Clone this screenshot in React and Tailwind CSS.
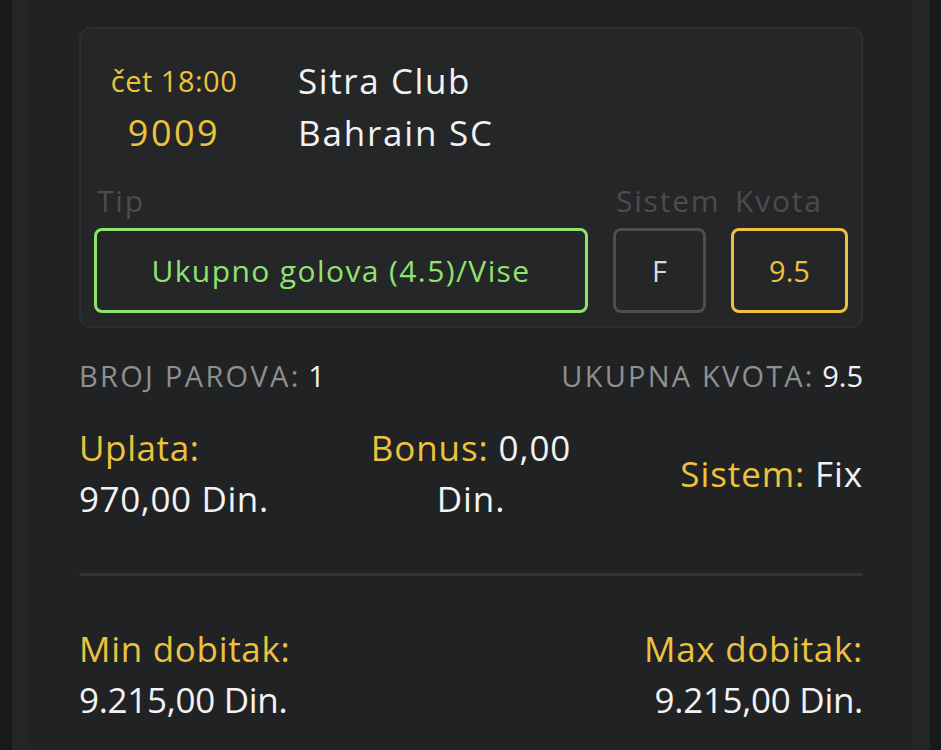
export default function App() {
  return (
    <div className="w-full h-[750px] flex bg-[#18191b] pl-[12px] pr-[11px] overflow-hidden font-['Open_Sans',sans-serif]">
      <div className="flex-1 border-x-[18px] border-[#242527] bg-[#212224] px-[49px] pt-[27px]">
        {/* card */}
        <div className="rounded-[12px] border-2 border-[#2c2e31] bg-[#252628] pt-[26px] pl-[13px] pr-[13px] pb-[13px]">
          <div className="flex">
            <div className="w-[160px] flex flex-col items-center">
              <div className="h-[52px] flex items-center text-[29px] tracking-[0.5px] text-[#ecc23e]">čet 18:00</div>
              <div className="h-[52px] flex items-center text-[36px] tracking-[2.5px] text-[#ecc23e]">9009</div>
            </div>
            <div className="ml-[44px] flex flex-col">
              <div className="h-[52px] flex items-center text-[35px] tracking-[1.6px] text-[#f2f2f2]">Sitra Club</div>
              <div className="h-[52px] flex items-center text-[35px] tracking-[1.8px] text-[#f2f2f2]">Bahrain SC</div>
            </div>
          </div>
          <div className="mt-[24px] grid grid-cols-[494px_93px_117px] gap-x-[25px]">
            <div className="h-[34px] flex items-center pl-[3px] text-[30px] tracking-[1.8px] text-[#4b4c4f] whitespace-nowrap">Tip</div>
            <div className="h-[34px] flex items-center pl-[3px] text-[30px] tracking-[1.8px] text-[#4b4c4f] whitespace-nowrap">Sistem</div>
            <div className="h-[34px] flex items-center pl-[4px] text-[30px] tracking-[1.8px] text-[#4b4c4f] whitespace-nowrap">Kvota</div>
            <div className="mt-[11px] h-[85px] rounded-[8px] border-[3px] border-[#8ee36b] flex items-center justify-center text-[30px] tracking-[1.4px] text-[#8fe36e] whitespace-nowrap">
              Ukupno golova (4.5)/Vise
            </div>
            <div className="mt-[11px] h-[85px] rounded-[8px] border-[3px] border-[#4d4e51] flex items-center justify-center text-[29px] text-[#d9d9d9]">
              F
            </div>
            <div className="mt-[11px] h-[85px] rounded-[8px] border-[3px] border-[#ecc23e] flex items-center justify-center text-[29px] text-[#ecc23e]">
              9.5
            </div>
          </div>
        </div>

        {/* totals */}
        <div className="mt-[28px] h-[40px] flex items-center justify-between text-[29px] text-[#8e8f91] whitespace-nowrap">
          <div>
            <span className="tracking-[2.3px]">BROJ PAROVA:</span> <span className="text-[#f2f2f2]">1</span>
          </div>
          <div>
            <span className="tracking-[2.2px]">UKUPNA KVOTA:</span> <span className="text-[#f2f2f2]">9.5</span>
          </div>
        </div>

        <div className="mt-[26px] grid grid-cols-3 items-center text-[35px] leading-[51px] text-[#f2f2f2]">
          <div>
            <div className="text-[#ecc23e] tracking-[0.6px]">Uplata:</div>
            <div className="tracking-[0.6px]">970,00 Din.</div>
          </div>
          <div className="text-center tracking-[0.9px]">
            <div>
              <span className="text-[#ecc23e]">Bonus:</span> 0,00
            </div>
            <div>Din.</div>
          </div>
          <div className="text-right tracking-[0.9px]">
            <span className="text-[#ecc23e]">Sistem:</span> Fix
          </div>
        </div>

        <div className="mt-[49px] h-[3px] rounded-full bg-[#323336]" />

        <div className="mt-[47px] flex justify-between text-[35px] leading-[51px] text-[#f2f2f2]">
          <div>
            <div className="text-[#ecc23e] tracking-[0.7px]">Min dobitak:</div>
            <div className="tracking-[-0.3px]">9.215,00 Din.</div>
          </div>
          <div className="text-right">
            <div className="text-[#ecc23e] tracking-[0.7px]">Max dobitak:</div>
            <div className="tracking-[-0.3px]">9.215,00 Din.</div>
          </div>
        </div>
      </div>
    </div>
  );
}
